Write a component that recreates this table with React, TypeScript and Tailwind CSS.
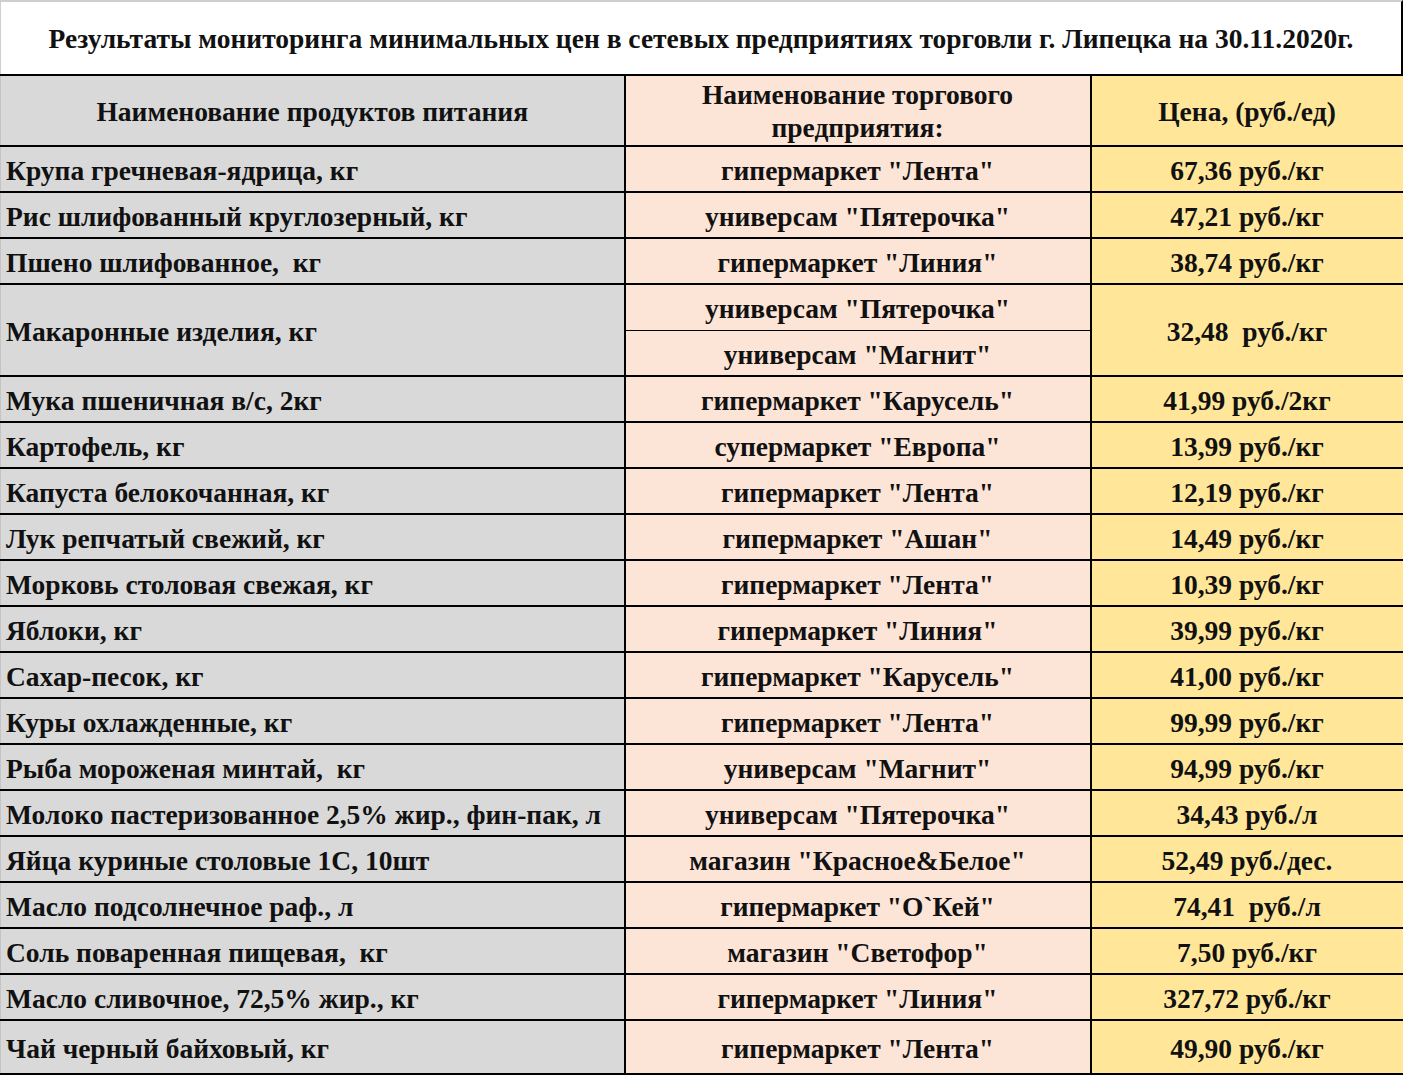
type Row = { name: string; store: string; price: string };

const rows: Row[] = [
  { name: 'Крупа гречневая-ядрица, кг', store: 'гипермаркет "Лента"', price: '67,36 руб./кг' },
  { name: 'Рис шлифованный круглозерный, кг', store: 'универсам "Пятерочка"', price: '47,21 руб./кг' },
  { name: 'Пшено шлифованное,  кг', store: 'гипермаркет "Линия"', price: '38,74 руб./кг' },
];

const rowsAfter: Row[] = [
  { name: 'Мука пшеничная в/с, 2кг', store: 'гипермаркет "Карусель"', price: '41,99 руб./2кг' },
  { name: 'Картофель, кг', store: 'супермаркет "Европа"', price: '13,99 руб./кг' },
  { name: 'Капуста белокочанная, кг', store: 'гипермаркет "Лента"', price: '12,19 руб./кг' },
  { name: 'Лук репчатый свежий, кг', store: 'гипермаркет "Ашан"', price: '14,49 руб./кг' },
  { name: 'Морковь столовая свежая, кг', store: 'гипермаркет "Лента"', price: '10,39 руб./кг' },
  { name: 'Яблоки, кг', store: 'гипермаркет "Линия"', price: '39,99 руб./кг' },
  { name: 'Сахар-песок, кг', store: 'гипермаркет "Карусель"', price: '41,00 руб./кг' },
  { name: 'Куры охлажденные, кг', store: 'гипермаркет "Лента"', price: '99,99 руб./кг' },
  { name: 'Рыба мороженая минтай,  кг', store: 'универсам "Магнит"', price: '94,99 руб./кг' },
  { name: 'Молоко пастеризованное 2,5% жир., фин-пак, л', store: 'универсам "Пятерочка"', price: '34,43 руб./л' },
  { name: 'Яйца куриные столовые 1С, 10шт', store: 'магазин "Красное&Белое"', price: '52,49 руб./дес.' },
  { name: 'Масло подсолнечное раф., л', store: 'гипермаркет "О`Кей"', price: '74,41  руб./л' },
  { name: 'Соль поваренная пищевая,  кг', store: 'магазин "Светофор"', price: '7,50 руб./кг' },
  { name: 'Масло сливочное, 72,5% жир., кг', store: 'гипермаркет "Линия"', price: '327,72 руб./кг' },
];

const last: Row = { name: 'Чай черный байховый, кг', store: 'гипермаркет "Лента"', price: '49,90 руб./кг' };

const nameCell = 'bg-[#d9d9d9] border-2 border-black border-l border-l-[#c4c4c4] pl-[5px] pt-[3px] text-left whitespace-pre';
const storeCell = 'bg-[#fce4d6] border-2 border-black pt-[3px] text-center whitespace-pre';
const priceCell = 'bg-[#ffe699] border-2 border-black pt-[3px] text-center whitespace-pre';

function DataRow({ row, tall }: { row: Row; tall?: boolean }) {
  return (
    <tr className={tall ? 'h-[54px]' : 'h-[46px]'}>
      <td className={nameCell}>{row.name}</td>
      <td className={storeCell}>{row.store}</td>
      <td className={priceCell}>{row.price}</td>
    </tr>
  );
}

export default function App() {
  return (
    <div
      className="w-[1403px] h-[1075px] bg-white text-[#111] flex flex-col overflow-hidden"
      style={{ fontFamily: '"Liberation Serif", "Times New Roman", serif' }}
    >
      <div className="h-[74px] shrink-0 flex items-center justify-center border-t-2 border-t-[#cfcfcf] border-l border-l-[#cfcfcf] border-r-2 border-r-black">
        <h1 className="text-[27.5px] font-bold pt-[2px]">
          Результаты мониторинга минимальных цен в сетевых предприятиях торговли г. Липецка на 30.11.2020г.
        </h1>
      </div>

      <table className="w-[1403px] table-fixed border-collapse text-[27.5px] font-bold leading-none">
        <colgroup>
          <col className="w-[624px]" />
          <col className="w-[466px]" />
          <col className="w-[313px]" />
        </colgroup>
        <thead>
          <tr className="h-[71px]">
            <th className="bg-[#d9d9d9] border-2 border-black border-l border-l-[#c4c4c4] pt-[2px] text-center">Наименование продуктов питания</th>
            <th className="bg-[#fce4d6] border-2 border-black text-center leading-[33px]">
              Наименование торгового
              <br />
              предприятия:
            </th>
            <th className="bg-[#ffe699] border-2 border-black pt-[2px] text-center">Цена, (руб./ед)</th>
          </tr>
        </thead>
        <tbody>
          {rows.map((r) => (
            <DataRow key={r.name} row={r} />
          ))}
          <tr className="h-[46px]">
            <td rowSpan={2} className={nameCell}>Макаронные изделия, кг</td>
            <td className="bg-[#fce4d6] border-2 border-b border-black border-b-black pt-[3px] text-center">универсам "Пятерочка"</td>
            <td rowSpan={2} className={priceCell}>32,48  руб./кг</td>
          </tr>
          <tr className="h-[46px]">
            <td className="bg-[#fce4d6] border-2 border-t border-black pt-[3px] text-center">универсам "Магнит"</td>
          </tr>
          {rowsAfter.map((r) => (
            <DataRow key={r.name} row={r} />
          ))}
          <DataRow row={last} tall />
        </tbody>
      </table>
    </div>
  );
}
